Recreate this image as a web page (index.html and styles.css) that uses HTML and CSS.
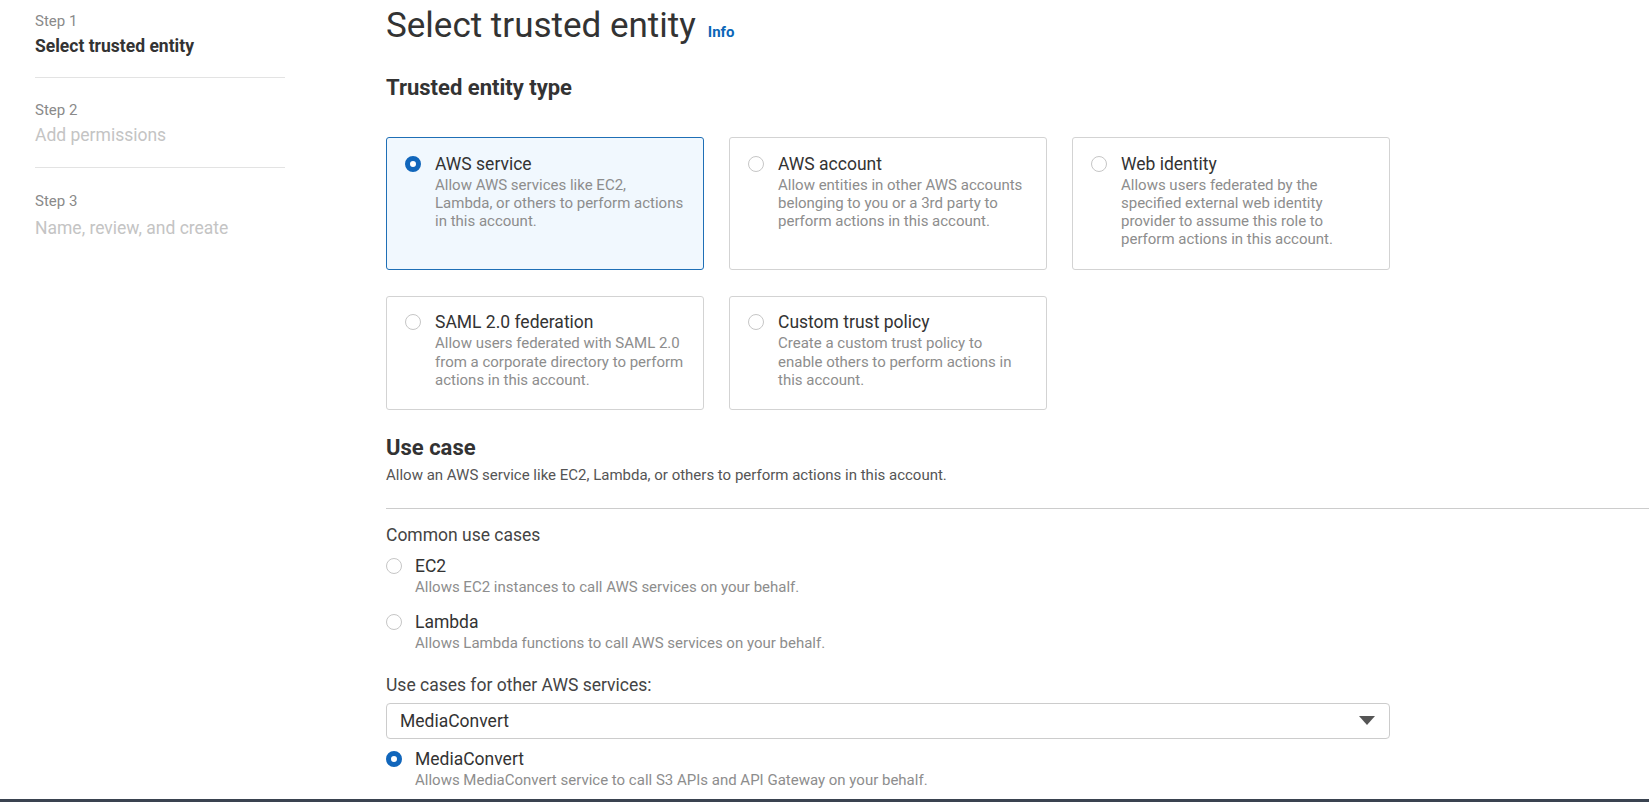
FILE: index.html
```html
<!DOCTYPE html>
<html lang="en">
<head>
<meta charset="utf-8">
<title>Select trusted entity</title>
<link rel="stylesheet" href="styles.css">
</head>
<body>
<div class="layout">
  <nav class="steps">
    <div class="step step-first">
      <div class="step-label">Step 1</div>
      <div class="step-title active">Select trusted entity</div>
    </div>
    <div class="step step-middle">
      <div class="step-label">Step 2</div>
      <div class="step-title">Add permissions</div>
    </div>
    <div class="step step-last">
      <div class="step-label">Step 3</div>
      <div class="step-title">Name, review, and create</div>
    </div>
  </nav>

  <main class="main">
    <div class="page-header">
      <h1 class="page-title">Select trusted entity</h1>
      <a class="info-link">Info</a>
    </div>

    <h2 class="section-title">Trusted entity type</h2>

    <div class="tiles">
      <div class="tile selected">
        <span class="radio checked"></span>
        <div class="tile-text">
          <div class="tile-title">AWS service</div>
          <div class="tile-desc">Allow AWS services like EC2, Lambda, or others to perform actions in this account.</div>
        </div>
      </div>
      <div class="tile">
        <span class="radio"></span>
        <div class="tile-text">
          <div class="tile-title">AWS account</div>
          <div class="tile-desc">Allow entities in other AWS accounts belonging to you or a 3rd party to perform actions in this account.</div>
        </div>
      </div>
      <div class="tile">
        <span class="radio"></span>
        <div class="tile-text">
          <div class="tile-title">Web identity</div>
          <div class="tile-desc">Allows users federated by the specified external web identity provider to assume this role to perform actions in this account.</div>
        </div>
      </div>
      <div class="tile">
        <span class="radio"></span>
        <div class="tile-text">
          <div class="tile-title">SAML 2.0 federation</div>
          <div class="tile-desc">Allow users federated with SAML 2.0 from a corporate directory to perform actions in this account.</div>
        </div>
      </div>
      <div class="tile">
        <span class="radio"></span>
        <div class="tile-text">
          <div class="tile-title">Custom trust policy</div>
          <div class="tile-desc">Create a custom trust policy to enable others to perform actions in this account.</div>
        </div>
      </div>
    </div>

    <section class="use-case">
      <h2 class="section-title use-case-title">Use case</h2>
      <p class="use-case-desc">Allow an AWS service like EC2, Lambda, or others to perform actions in this account.</p>
      <div class="divider"></div>

      <div class="group-label">Common use cases</div>
      <div class="option option-first">
        <span class="radio"></span>
        <div class="option-text">
          <div class="option-title">EC2</div>
          <div class="option-desc">Allows EC2 instances to call AWS services on your behalf.</div>
        </div>
      </div>
      <div class="option">
        <span class="radio"></span>
        <div class="option-text">
          <div class="option-title">Lambda</div>
          <div class="option-desc">Allows Lambda functions to call AWS services on your behalf.</div>
        </div>
      </div>

      <div class="group-label select-label">Use cases for other AWS services:</div>
      <div class="select">
        <span class="select-value">MediaConvert</span>
        <span class="select-arrow"></span>
      </div>
      <div class="option option-after-select">
        <span class="radio checked"></span>
        <div class="option-text">
          <div class="option-title">MediaConvert</div>
          <div class="option-desc">Allows MediaConvert service to call S3 APIs and API Gateway on your behalf.</div>
        </div>
      </div>
    </section>
  </main>
</div>
<div class="footer-bar"></div>
</body>
</html>
```

FILE: styles.css
```css
html, body {
  margin: 0;
  padding: 0;
  background: #ffffff;
}

body {
  font-family: Roboto, "Liberation Sans", Arial, sans-serif;
  color: #333333;
  overflow: hidden;
}

.layout {
  display: flex;
  align-items: flex-start;
}

/* ---------- Steps sidebar ---------- */
.steps {
  flex: none;
  width: 250px;
  margin-left: 35px;
}

.step {
  padding: 22px 0 18.5px;
  border-bottom: 1px solid #e3e3e3;
}

.step-first {
  padding-top: 10.5px;
}

.step-middle {
  padding-bottom: 19.5px;
}

.step-last {
  padding-top: 23.5px;
  border-bottom: none;
}

.step-label {
  font-size: 15px;
  line-height: 20px;
  color: #8a8a8a;
}

.step-title {
  margin-top: 3.5px;
  font-size: 17.5px;
  line-height: 24px;
  color: #c4c4c4;
}

.step-last .step-title {
  margin-top: 4.5px;
}

.step-title.active {
  font-weight: 700;
  color: #333333;
}

/* ---------- Main ---------- */
.main {
  flex: 1;
  min-width: 0;
  margin-left: 101px;
  padding-top: 6px;
}

.page-header {
  display: flex;
  align-items: baseline;
  gap: 12px;
}

.page-title {
  margin: 0;
  font-size: 35px;
  line-height: 40px;
  font-weight: 400;
  color: #333333;
}

.info-link {
  font-size: 15px;
  font-weight: 700;
  color: #0b66b8;
  cursor: pointer;
}

.section-title {
  margin: 27.5px 0 0;
  font-size: 22px;
  line-height: 28px;
  font-weight: 700;
  color: #333333;
}

/* ---------- Tiles ---------- */
.tiles {
  display: grid;
  grid-template-columns: repeat(3, 318px);
  column-gap: 25px;
  row-gap: 26px;
  margin-top: 35.5px;
}

.tile {
  display: flex;
  gap: 14px;
  padding: 14.5px 18px 20px;
  border: 1px solid #d3d3d3;
  border-radius: 3px;
  background: #ffffff;
}

.tile.selected {
  border-color: #1f6fb6;
  background: #f1f8fe;
}

.radio {
  flex: none;
  box-sizing: border-box;
  width: 16px;
  height: 16px;
  margin-top: 3px;
  border-radius: 50%;
  border: 1.5px solid #c6c6c6;
  background: #ffffff;
}

.radio.checked {
  border: 5px solid #1166bb;
}

.tile-title,
.option-title {
  font-size: 17.5px;
  line-height: 22px;
  color: #333333;
}

.tile-desc,
.option-desc {
  margin-top: 1px;
  font-size: 15px;
  line-height: 18.33px;
  color: #8d8d8d;
}

/* ---------- Use case ---------- */
.use-case-title {
  margin-top: 23.5px;
}

.use-case-desc {
  margin: 4px 0 0;
  font-size: 15px;
  line-height: 18.33px;
  color: #555555;
}

.divider {
  margin-top: 23.5px;
  border-top: 1px solid #cccccc;
}

.group-label {
  margin-top: 15.5px;
  font-size: 17.5px;
  line-height: 22px;
  color: #444444;
}

.option {
  display: flex;
  gap: 13px;
  margin-top: 14.5px;
}

.option-first {
  margin-top: 9px;
}

.select-label {
  margin-top: 22px;
}

.select {
  box-sizing: border-box;
  width: 1004px;
  height: 36px;
  margin-top: 6.5px;
  padding: 0 14px 0 13px;
  display: flex;
  align-items: center;
  justify-content: space-between;
  border: 1px solid #cccccc;
  border-radius: 4px;
  font-size: 17.5px;
  color: #333333;
}

.select-arrow {
  width: 0;
  height: 0;
  border-left: 8px solid transparent;
  border-right: 8px solid transparent;
  border-top: 9px solid #555555;
}

.option-after-select {
  margin-top: 9.5px;
}

/* ---------- Footer bar ---------- */
.footer-bar {
  position: fixed;
  left: 0;
  right: 0;
  bottom: 0;
  height: 3px;
  background: #3a4350;
}
```
